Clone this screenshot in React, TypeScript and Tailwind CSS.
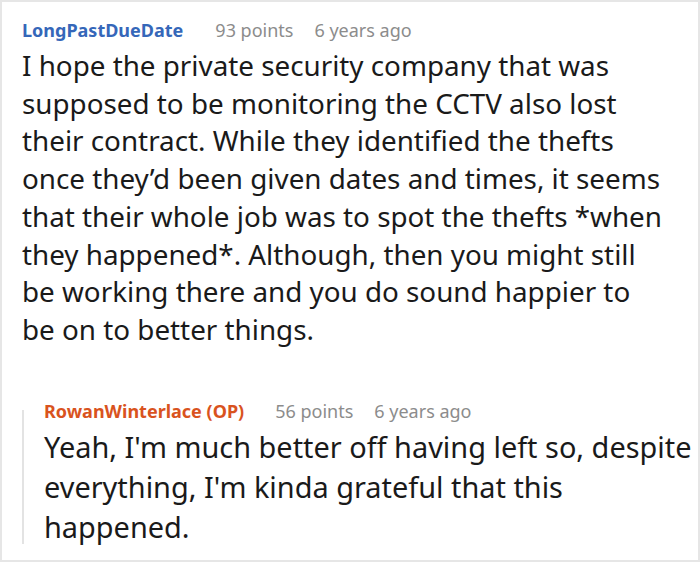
import React from "react";

export default function App() {
  return (
    <div className="w-[700px] h-[562px] bg-white border-2 border-[#e6e6e6] overflow-hidden" style={{ fontFamily: '"Noto Sans", "Open Sans", sans-serif' }}>
      <div className="pl-[20px] pt-[16px]">
        <div className="flex items-baseline text-[18px] leading-[24px]">
          <span className="font-bold text-[#3567b9]">LongPastDueDate</span>
          <span className="ml-[32px] text-[#8c8c8c]">93 points</span>
          <span className="ml-[21px] text-[#8c8c8c]">6 years ago</span>
        </div>
        <p className="mt-[5px] text-[27.8px] leading-[37.7px] text-[#1a1a1a]">
          I hope the private security company that was<br />
          supposed to be monitoring the CCTV also lost<br />
          their contract. While they identified the thefts<br />
          once they’d been given dates and times, it seems<br />
          that their whole job was to spot the thefts *when<br />
          they happened*. Although, then you might still<br />
          be working there and you do sound happier to<br />
          be on to better things.
        </p>
        <div className="mt-[50px] flex">
          <div className="mt-[11px] mb-[3px] w-[2px] bg-[#e3e3e3]" />
          <div className="pl-[20px]">
            <div className="flex items-baseline text-[18px] leading-[24px]">
              <span className="font-bold text-[#d9531e]">RowanWinterlace (OP)</span>
              <span className="ml-[31px] text-[#8c8c8c]">56 points</span>
              <span className="ml-[21px] text-[#8c8c8c]">6 years ago</span>
            </div>
            <p className="mt-[4px] whitespace-nowrap text-[28.9px] leading-[40px] text-[#1a1a1a]">
              Yeah, I'm much better off having left so, despite<br />
              everything, I'm kinda grateful that this<br />
              happened.
            </p>
          </div>
        </div>
      </div>
    </div>
  );
}
